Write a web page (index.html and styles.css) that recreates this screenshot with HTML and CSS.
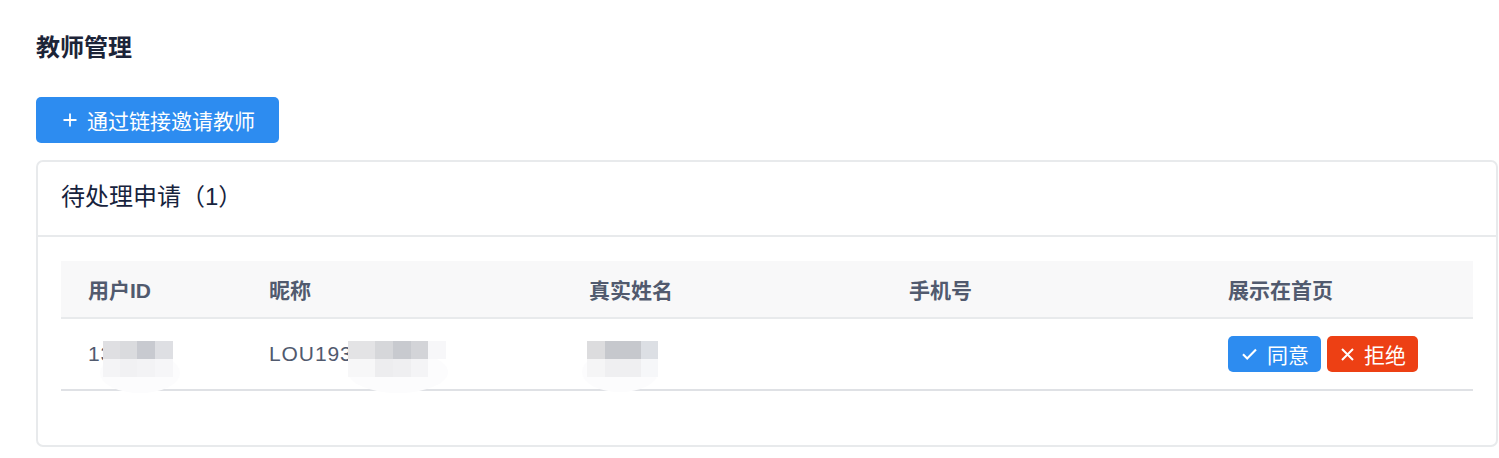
FILE: index.html
```html
<!DOCTYPE html>
<html lang="zh-CN">
<head>
<meta charset="utf-8">
<title>教师管理</title>
<link rel="stylesheet" href="styles.css">
</head>
<body>
<div class="page">
  <h1 class="page-title">教师管理</h1>
  <button class="btn btn-primary btn-invite" type="button">
    <svg class="icon-plus" width="14" height="14" viewBox="0 0 14 14"><path d="M7 0.5v13M0.5 7h13" stroke="#fff" stroke-width="1.8" fill="none"/></svg>
    <span>通过链接邀请教师</span>
  </button>

  <div class="card">
    <div class="card-head">待处理申请（1）</div>
    <div class="card-body">
      <table class="table">
        <colgroup>
          <col class="c-id"><col class="c-nick"><col class="c-name"><col class="c-phone"><col class="c-show">
        </colgroup>
        <thead>
          <tr><th>用户ID</th><th>昵称</th><th>真实姓名</th><th>手机号</th><th>展示在首页</th></tr>
        </thead>
        <tbody>
          <tr>
            <td class="masked">
              <span>13</span>
              <svg class="mosaic m-id" width="84" height="56" viewBox="0 0 84 56">
                <ellipse cx="42" cy="34" rx="40" ry="20" fill="#fcfcfd"/>
                <rect x="5" y="2" width="17" height="18" fill="#dfdfe2"/>
                <rect x="22" y="2" width="17" height="18" fill="#dadbde"/>
                <rect x="39" y="2" width="18" height="18" fill="#c8cad0"/>
                <rect x="57" y="2" width="18" height="18" fill="#dedfe3"/>
                <rect x="5" y="20" width="17" height="18" fill="#f4f4f6"/>
                <rect x="22" y="20" width="17" height="18" fill="#f1f1f3"/>
                <rect x="39" y="20" width="18" height="18" fill="#f3f3f5"/>
                <rect x="57" y="20" width="18" height="18" fill="#f6f6f8"/>
              </svg>
            </td>
            <td class="masked">
              <span>LOU193</span>
              <svg class="mosaic m-nick" width="110" height="56" viewBox="0 0 110 56">
                <ellipse cx="55" cy="33" rx="50" ry="21" fill="#fcfcfd"/>
                <rect x="5" y="2" width="27" height="18" fill="#e3e3e5"/>
                <rect x="32" y="2" width="18" height="18" fill="#d6d7da"/>
                <rect x="50" y="2" width="18" height="18" fill="#c8cacf"/>
                <rect x="68" y="2" width="17" height="18" fill="#d3d4d8"/>
                <rect x="85" y="2" width="18" height="18" fill="#f7f7f9"/>
                <rect x="5" y="20" width="27" height="18" fill="#f7f7f8"/>
                <rect x="32" y="20" width="18" height="18" fill="#ededef"/>
                <rect x="50" y="20" width="18" height="18" fill="#efeff1"/>
                <rect x="68" y="20" width="17" height="18" fill="#f4f4f6"/>
              </svg>
            </td>
            <td class="masked">
              <svg class="mosaic m-name" width="84" height="56" viewBox="0 0 84 56">
                <ellipse cx="40" cy="33" rx="38" ry="20" fill="#fcfcfd"/>
                <rect x="7" y="2" width="18" height="18" fill="#dcdcde"/>
                <rect x="25" y="2" width="36" height="18" fill="#c6c8cd"/>
                <rect x="61" y="2" width="17" height="18" fill="#dcdfe4"/>
                <rect x="7" y="20" width="18" height="18" fill="#f5f5f6"/>
                <rect x="25" y="20" width="36" height="18" fill="#efeff1"/>
                <rect x="61" y="20" width="17" height="18" fill="#f6f7f9"/>
              </svg>
            </td>
            <td></td>
            <td>
              <div class="actions">
                <button class="btn btn-sm btn-primary" type="button">
                  <svg width="15" height="12" viewBox="0 0 15 12"><path d="M1 6.2l4.2 4.3L14 1.5" stroke="#fff" stroke-width="2.1" fill="none"/></svg>
                  <span>同意</span>
                </button>
                <button class="btn btn-sm btn-error" type="button">
                  <svg width="13" height="13" viewBox="0 0 13 13"><path d="M1 1l11 11M12 1L1 12" stroke="#fff" stroke-width="2" fill="none"/></svg>
                  <span>拒绝</span>
                </button>
              </div>
            </td>
          </tr>
        </tbody>
      </table>
    </div>
  </div>
</div>
</body>
</html>
```

FILE: styles.css
```css
* { box-sizing: border-box; }

body {
  margin: 0;
  background: #fff;
  font-family: "Liberation Sans", "Noto Sans CJK SC", sans-serif;
  color: #515a6e;
}

.page {
  padding: 30px 1px 0 36px;
}

.page-title {
  margin: 0;
  font-size: 24px;
  line-height: 36px;
  font-weight: 700;
  color: #1c2438;
}

.btn {
  display: inline-flex;
  align-items: center;
  border: none;
  border-radius: 5px;
  color: #fff;
  font-family: "Liberation Sans", "Noto Sans CJK SC", sans-serif;
  cursor: pointer;
}

.btn-primary { background: #2d8cf0; }
.btn-error { background: #ed4014; }

.btn-invite {
  margin-top: 31px;
  height: 46px;
  padding: 0 24px 0 27px;
  font-size: 21px;
  gap: 10px;
}

.icon-plus { flex: none; }

.card {
  margin-top: 17px;
  border: 2px solid #e8eaec;
  border-radius: 7px;
  background: #fff;
}

.card-head {
  padding: 22px 23px 26px;
  font-size: 24px;
  line-height: 25px;
  color: #17233d;
  border-bottom: 2px solid #e8eaec;
}

.card-body {
  padding: 24px 23px 54px;
}

.table {
  width: 100%;
  border-collapse: collapse;
  table-layout: fixed;
  font-size: 21px;
}

.c-id { width: 181px; }
.c-nick { width: 320px; }
.c-name { width: 320px; }
.c-phone { width: 319px; }

.table th {
  height: 57px;
  padding: 0 27px;
  background: #f8f8f9;
  text-align: left;
  font-weight: 700;
  color: #515a6e;
  border-bottom: 2px solid #e8eaec;
  white-space: nowrap;
}

.table td {
  height: 72px;
  padding: 0 27px;
  color: #515a6e;
  border-bottom: 2px solid #dfe1e5;
  white-space: nowrap;
  letter-spacing: 0.9px;
}

.masked { position: relative; }

.mosaic {
  position: absolute;
  top: 20px;
}

.m-id { left: 37px; }
.m-nick { left: 101px; }
.m-name { left: 18px; }

.actions {
  display: flex;
  gap: 6px;
  letter-spacing: 0;
}

.btn-sm {
  height: 36px;
  padding: 0 12px 0 14px;
  font-size: 21px;
  gap: 10px;
}
```
